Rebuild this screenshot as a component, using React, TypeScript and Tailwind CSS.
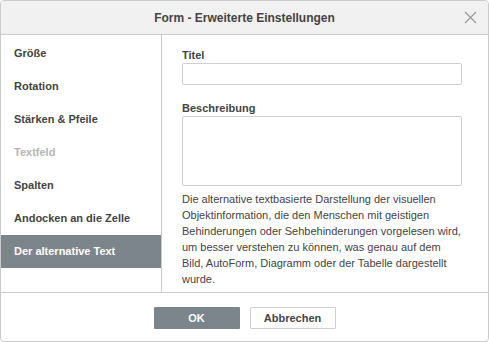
import { X } from 'lucide-react';

const items = [
  { label: 'Größe' },
  { label: 'Rotation' },
  { label: 'Stärken & Pfeile' },
  { label: 'Textfeld', disabled: true },
  { label: 'Spalten' },
  { label: 'Andocken an die Zelle' },
  { label: 'Der alternative Text', active: true },
];

export default function App() {
  return (
    <div className="w-[489px] h-[342px] bg-white font-['Liberation_Sans',Arial,sans-serif] text-[#444]">
      <div className="w-full h-full flex flex-col border border-[#cbcbcb] rounded-[4px] overflow-hidden">
        {/* header */}
        <div className="relative h-[34px] shrink-0 bg-[#f1f1f1] border-b border-[#cbcbcb] flex items-center justify-center">
          <span className="text-[12px] font-bold text-[#444]">Form - Erweiterte Einstellungen</span>
          <button className="absolute right-[10px] top-[9px] text-[#999]">
            <svg width="15" height="15" viewBox="0 0 15 15" fill="none" stroke="currentColor" strokeWidth="1.2">
              <path d="M2 2 L13 13 M13 2 L2 13" />
            </svg>
          </button>
        </div>

        {/* body */}
        <div className="flex h-[258px] shrink-0 border-b border-[#cbcbcb]">
          <div className="w-[161px] shrink-0 border-r border-[#cbcbcb] pt-[2px]">
            {items.map((item, i) => (
              <div
                key={i}
                className={
                  item.active
                    ? 'h-[33px] flex items-center pl-[13px] text-[11px] font-bold bg-[#7d858c] text-white'
                    : item.disabled
                    ? 'h-[33px] flex items-center pl-[13px] text-[11px] font-bold text-[#b5b5b5]'
                    : 'h-[33px] flex items-center pl-[13px] text-[11px] font-bold text-[#444]'
                }
              >
                {item.label}
              </div>
            ))}
          </div>

          <div className="flex-1 pl-[20px] pt-[13px]">
            <div className="text-[11px] font-bold leading-[14px]">Titel</div>
            <input className="mt-[1px] w-[280px] h-[22px] border border-[#cfcfcf] rounded-[2px] outline-none block" />
            <div className="mt-[16px] text-[11px] font-bold leading-[14px]">Beschreibung</div>
            <textarea className="mt-[1px] w-[280px] h-[70px] border border-[#cfcfcf] rounded-[2px] outline-none resize-none block" />
            <p className="mt-[5px] w-[282px] text-[11px] leading-[16px] text-[#444]">
              Die alternative textbasierte Darstellung der visuellen Objektinformation, die den Menschen mit geistigen
              Behinderungen oder Sehbehinderungen vorgelesen wird, um besser verstehen zu können, was genau auf dem
              Bild, AutoForm, Diagramm oder der Tabelle dargestellt wurde.
            </p>
          </div>
        </div>

        {/* footer */}
        <div className="flex-1 flex justify-center gap-[10px] pt-[14px]">
          <button className="w-[86px] h-[22px] bg-[#7d858c] text-white text-[11px] font-bold rounded-[1px]">OK</button>
          <button className="w-[86px] h-[22px] bg-white border border-[#cfcfcf] text-[#444] text-[11px] font-bold rounded-[1px]">
            Abbrechen
          </button>
        </div>
      </div>
    </div>
  );
}
